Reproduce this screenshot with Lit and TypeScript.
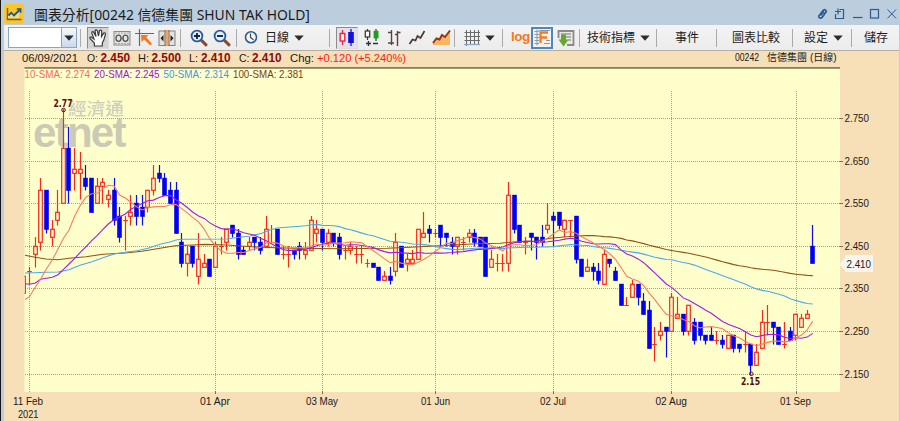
import { LitElement, html, svg, css } from "lit";
import { customElement } from "lit/decorators.js";

type Bar = [open: number, high: number, low: number, close: number];

// Daily bars, prices in cents: open high low close
const BARS: Bar[] = `
234 238 234 238|239 240 236 239|243 247 240 245|246 261 244 258|258 258 248 249|247 251 245 249|251 258 250 253|255 277 255 268
268 273 255 258|262 268 258 263|262 267 256 263|261 264 258 259|261 261 253 253|255 261 255 259|259 261 255 260|256 258 254 257
258 261 250 251|252 254 246 247|251 252 244 251|252 257 250 253|255 257 250 252|254 257 250 252|254 258 253 258|258 264 257 261
262 264 260 261|261 262 257 257|258 260 255 255|258 260 248 248|246 248 240 241|241 245 238 243|245 245 240 241|238 248 236 242
240 243 240 241|242 242 238 238|240 246 240 245|245 247 243 245|246 249 244 249|250 250 247 248|248 249 242 243|244 245 243 243
245 247 244 246|247 247 244 246|246 247 243 244|245 252 245 249|246 250 246 246|249 249 243 243|243 245 242 243|243 245 240 243
244 244 242 243|245 246 242 244|243 246 242 244|244 252 244 251|248 251 246 249|249 249 244 246|246 249 245 248|248 248 245 246
247 248 242 243|244 245 242 244|244 246 243 245|243 245 241 243|243 245 241 243|241 242 240 241|241 241 240 240|240 240 237 237
237 239 237 238|238 240 236 237|239 248 238 246|245 245 240 240|241 243 239 242|241 244 241 242|242 249 242 249|247 253 247 248
249 250 246 248|248 249 247 248|250 250 245 247|248 248 245 247|246 247 243 245|245 247 243 247|246 247 244 246|247 249 246 248
248 249 245 246|247 247 245 245|247 247 238 238|240 244 240 242|241 243 239 241|241 243 239 241|241 260 239 257|257 257 248 249
250 250 246 246|246 247 243 246|248 248 244 247|247 247 242 246|247 250 245 246|249 255 248 250|252 253 245 251|253 253 249 250
249 251 247 251|251 251 247 251|252 252 241 242|242 242 238 238|239 242 239 240|240 241 237 239|239 241 236 237|236 244 236 243
242 242 240 241|239 240 237 237|236 236 231 231|231 233 231 231|233 237 233 236|236 236 231 233|232 234 229 229|230 232 221 221
222 226 218 222|224 227 223 225|226 226 219 225|225 234 225 233|228 233 228 229|229 229 224 225|225 231 224 231|227 228 222 223
227 227 223 224|224 224 222 223|224 226 223 223|223 225 222 223|223 224 221 222|221 224 221 224|224 224 220 221|222 222 220 221
222 225 220 222|222 222 215 217|217 222 217 220|221 230 221 227|227 231 224 227|227 227 222 226|226 226 222 222|222 227 221 222
225 226 223 223|224 229 223 229|226 229 226 228|228 230 228 229|245 250 241 241`
  .trim()
  .split(/[|\n]/)
  .map((s) => s.trim().split(" ").map(Number) as Bar);

const xOf = (i: number) => 23.87 + 5.635 * i;
const yOf = (cents: number) => 118 + (275 - cents) * 4.26;

// Each average opens with points that depend on bars before the visible range
const AVERAGES = [
  { n: 100, color: "#96500f", lead: "25,255.3 35,257.3 46,259 58,259.7 69,258.3 86,256.7 103,254.3 125,253 142,251.3 160,248.3 175,245.7 193,245 205,244.4 227,245 240,246 260,247.3 293,248.3 340,248.7 387,248.3 410,247.3 453,245 477,243.7 500,243.3 513,242 537,241 550,238.3 567,236.7" },
  { n: 50, color: "#4aa8f2", lead: "25,273 35,272.7 46,272.3 58,272 69,269.7 80,265.3 92,261.7 103,257.7 114,254 125,252.3 137,250.7 148,248.3 160,244.2 171,241.7 176,240 181,239.3 227,239 232,238.3 250,236 262,233.3 270,230 277,228 293,226.7" },
  { n: 20, color: "#a31be8", lead: "25,283.7 29.5,284.3 35.3,283 40.7,279.3 46.3,278.3 52.3,277.3 58,274.7 63.5,269.3 69,264 74.7,258.3 80,252.7 86.3,246.3 91.7,240.7 97.3,235.3 102.7,229.7 108.3,224 113.7,219.7 120,216.7 125.3,214" },
  { n: 10, color: "#fb7a62", lead: "25,299.5 29.5,296.7 33,290.7 40.7,279 46.3,269 52.3,260 58,249 63.5,238.3 69,230" },
].map(({ n, color, lead }) => {
  const pts: string[] = [];
  for (let i = n - 1; i < BARS.length; i++) {
    let sum = 0;
    for (let k = i - n + 1; k <= i; k++) sum += BARS[k][3];
    pts.push(`${xOf(i).toFixed(1)},${(yOf(sum / n) + 0.3).toFixed(1)}`);
  }
  return { color, points: `${lead} ${pts.join(" ")}` };
});

const PRICE_LINES = [275, 265, 255, 245, 235, 225, 215];
const DATES: [x: number, label: string, left: number, width: number][] = [
  [29.5, "11 Feb", 13, 30],
  [215.5, "01 Apr", 200, 30],
  [322.5, "03 May", 306, 32],
  [435.5, "01 Jun", 421, 29],
  [553.5, "02 Jul", 540, 26],
  [671.5, "02 Aug", 655.5, 31.5],
  [796.5, "01 Sep", 780, 31],
];

const label = (x: number, y: number, w: number, text: string, cls = "") =>
  svg`<text class=${cls} x=${x} y=${y} textLength=${w} lengthAdjust="spacingAndGlyphs">${text}</text>`;

@customElement("price-chart")
export class PriceChart extends LitElement {
  static styles = css`
    :host { display: block; }
    svg { display: block; }
    text { font-family: "Liberation Sans", "Noto Sans CJK TC", sans-serif; font-size: 11.5px; fill: #1c1a18; }
    .val { font-weight: bold; font-size: 12px; fill: #8c0a0a; }
    .up { fill: #fb1c12; }
    .s10 { fill: #fb6a55; font-size: 11px; }
    .s20 { fill: #9d12dd; font-size: 11px; }
    .s50 { fill: #4297e0; font-size: 11px; }
    .s100 { fill: #7c3c10; font-size: 11px; }
    .name { font-size: 10px; }
    .mark { font-family: "DejaVu Sans", sans-serif; font-weight: bold; font-size: 9.6px; fill: #5c0c0c; }
    .logo { font-weight: bold; font-size: 42px; fill: #cbcab5; }
    .logo-cjk { font-family: "Noto Sans CJK TC", sans-serif; font-weight: 500; font-size: 17px; fill: #cfceba; }
    .grid { stroke: #a4a38c; stroke-dasharray: 1 1; shape-rendering: crispEdges; }
    .tick { stroke: #77705e; shape-rendering: crispEdges; }
    .avg { fill: none; stroke-width: 1.1; }
    .wick { stroke-width: 1.2; }
    .rise { stroke: #f8281c; }
    .fall { stroke: #0a0af5; }
    .box { fill: #ffffcc; stroke: #f8281c; stroke-width: 1.2; }
    .block { fill: #0000fa; }
    .ring { fill: none; stroke: #5c0c0c; }
  `;

  private bar([o, h, l, c]: Bar, i: number) {
    const x = Math.floor(xOf(i)) + 0.5;
    const top = Math.round(yOf(Math.max(o, c)));
    const bottom = Math.round(yOf(Math.min(o, c)));
    const high = Math.round(yOf(h));
    const low = Math.round(yOf(l)) + 0.5;
    if (o === c)
      return svg`<path class="wick rise" d="M${x} ${high}V${low}M${x - 2.3} ${top + 0.5}H${x + 2.3}"/>`;
    if (c < o)
      return svg`<path class="wick fall" d="M${x} ${high}V${low}"/>
        <rect class="block" x=${x - 2.3} y=${top - 0.2} width="4.6" height=${bottom - top + 1}/>`;
    return svg`<path class="wick rise" d="M${x} ${high}V${low}"/>
      <rect class="box" x=${x - 1.8} y=${top + 0.3} width="3.6" height=${bottom - top}/>`;
  }

  render() {
    return html`<svg width="895" height="371" viewBox="4 50 895 371">
      <rect x="4" y="50" width="895" height="371" fill="#f7dfb7"/>
      <rect x="4" y="50" width="895" height="1" fill="#b5aea4"/>
      <rect x="24.5" y="68" width="815.5" height="324" fill="#ffffcc"/>
      <rect x="24.5" y="67" width="815.5" height="1.8" fill="#858062"/>

      ${label(22, 62, 56, "06/09/2021")}
      ${label(87, 62, 11, "O:")}${label(100.5, 62, 29.5, "2.450", "val")}
      ${label(138, 62, 11, "H:")}${label(151.5, 62, 29.5, "2.500", "val")}
      ${label(189, 62, 9, "L:")}${label(201, 62, 29.5, "2.410", "val")}
      ${label(239, 62, 10.5, "C:")}${label(252, 62, 29.5, "2.410", "val")}
      ${label(290, 62, 24, "Chg:")}${label(317, 62, 89, "+0.120 (+5.240%)", "up")}
      ${label(735, 60.5, 24, "00242", "name")}
      ${label(767, 60.5, 40, "信德集團", "name")}
      ${label(810, 60.5, 26.5, "(日線)", "name")}
      ${label(24.5, 77.5, 65.5, "10-SMA: 2.274", "s10")}
      ${label(94, 77.5, 65.5, "20-SMA: 2.245", "s20")}
      ${label(163.5, 77.5, 65.5, "50-SMA: 2.314", "s50")}
      ${label(233, 77.5, 70.5, "100-SMA: 2.381", "s100")}

      ${label(68, 114.5, 56, "經濟通", "logo-cjk")}
      <text class="logo" x="33" y="147" textLength="93.5" lengthAdjust="spacing">etnet</text>

      ${PRICE_LINES.map((p) => {
        const y = Math.round(yOf(p)) + 0.5;
        return svg`<path class="grid" d="M25 ${y}H840"/><path class="tick" d="M839 ${y}H843"/>
          ${label(844.5, y + 3.8, 24.5, (p / 100).toFixed(3))}`;
      })}
      ${DATES.map(
        ([x, text, left, w], i) => svg`<path class="grid" d="M${x} 91V392"/>
          ${i ? svg`<path class="tick" d="M${x} 391V394"/>` : ""}
          ${label(left, 405, w, text)}`,
      )}
      ${label(18, 418, 20.5, "2021")}

      <svg x="24.5" y="80" width="815.5" height="312" viewBox="24.5 80 815.5 312">
        ${BARS.map((b, i) => this.bar(b, i))}
        ${AVERAGES.map((a) => svg`<polyline class="avg" points=${a.points} stroke=${a.color}/>`)}
        <circle class="ring" cx="63.5" cy="110" r="1.8"/>
        <circle class="ring" cx="751.3" cy="373.8" r="1.8"/>
      </svg>
      ${label(53.5, 107, 19, "2.77", "mark")}
      ${label(741, 384.5, 19, "2.15", "mark")}

      <path d="M839 264L845 258V255H873V272H845V270Z" fill="#f9f5ee"/>
      ${label(846.5, 268, 24.5, "2.410")}
    </svg>`;
  }
}

const caret = html`<svg class="caret" width="10" height="6" viewBox="0 0 10 6"><path d="M0.3 0.5H9.7L5 5.7Z" fill="#2c2a2a"/></svg>`;
const sep = html`<i class="sep"></i>`;

const magnifier = (plus: boolean) => html`<svg width="18" height="18" viewBox="0 0 18 18">
  <path d="M11.2 11.2L16 15.8" stroke="#8a4a2c" stroke-width="3" stroke-linecap="round"/>
  <circle cx="7" cy="7" r="5.4" fill="#e3effa" stroke="#2a5d98" stroke-width="1.8"/>
  <path d=${plus ? "M4 7H10M7 4V10" : "M4 7H10"} stroke="#15253e" stroke-width="1.9"/>
</svg>`;

@customElement("app-root")
export class AppRoot extends LitElement {
  static styles = css`
    :host {
      display: flex;
      flex-direction: column;
      box-sizing: border-box;
      width: 900px;
      height: 421px;
      overflow: hidden;
      border-left: 1px solid #15151a;
      background: #bccddd;
      font-family: "Liberation Sans", "Noto Sans CJK TC", sans-serif;
      color: #1b1b1b;
    }
    svg { display: block; flex: none; }
    .title { display: flex; align-items: center; height: 25px; padding: 0 1px 0 3px; }
    .title span {
      margin: 4px 0 0 10px;
      font: 13.9px/20px "Noto Sans", "Noto Sans CJK TC", sans-serif;
      white-space: nowrap;
    }
    .title .win { margin: 3px 0 0 auto; }
    .appicon { margin-top: 3px; }
    .bar {
      display: flex;
      align-items: center;
      height: 25px;
      margin-left: 3px;
      margin-right: 1px;
      padding-left: 4px;
      background: linear-gradient(#f4f3f3, #ececec);
      font-size: 12px;
      font-family: "Noto Sans CJK TC", sans-serif;
      white-space: nowrap;
    }
    .bar > div > span { line-height: 22px; margin-top: -2px; flex: none; }
    .sep { flex: none; width: 1px; height: 18px; background: #aaa; }
    .combo { display: flex; box-sizing: border-box; width: 69px; height: 21px; border: 1px solid #8ca6c2; background: #fff; margin-right: 3px; flex: none; }
    .combo div { display: flex; align-items: center; justify-content: center; width: 14px; margin-left: auto; border-left: 1px solid #8ca6c2; background: linear-gradient(#f6f9fc, #c9d9ea); }
    .btn { box-sizing: border-box; flex: none; display: flex; align-items: center; justify-content: center; width: 22px; height: 22px; }
    .down { border: 1px solid #8d8b8b; border-right-color: #ddd; border-bottom-color: #ddd; background: #d5d3d3; }
    .lit { border: 2px solid #4f87b8; background: #eef3f8; }
    .pale { background: #e2e2ee; }
    .log { font: bold 13.5px/22px "Liberation Sans", sans-serif; color: #f2791f; width: 20px; letter-spacing: -0.5px; }
    .g1 { display: flex; align-items: center; flex: none; }
    .tools { gap: 4px; padding: 0 4px 0 6px; }
    .zoom { gap: 5px; padding: 0 5px 0 9px; }
    .period { gap: 5px; padding: 0 25px 0 7px; }
    .period svg:first-child { margin-right: 2px; }
    .types { gap: 6px; padding: 0 3px 0 6px; }
    .gridding { gap: 4px; padding: 0 7px 0 9px; }
    .modes { gap: 0; padding: 0 4px 0 8px; }
    .modes svg { margin-left: 4px; }
    .modes .lit svg { margin-left: 0; }
    .ind { gap: 5px; padding: 0 6px 0 7px; }
    .event { padding: 0 17px 0 18px; }
    .compare { padding: 0 12px 0 15px; }
    .setup { gap: 5px; padding: 0 8px 0 11px; }
    .save { padding-left: 12px; }
    price-chart { margin-left: 3px; }
  `;

  render() {
    return html`
      <div class="title">
        <svg class="appicon" width="20" height="20" viewBox="0 0 20 20">
          <rect width="20" height="20" rx="3" fill="#fcc62b"/>
          <path d="M3.5 4V15.5H17.5" fill="none" stroke="#5a6570" stroke-width="1.5"/>
          <path d="M4 14V12L7 9L10 12L15 7V14Z" fill="#f5dc80"/>
          <path d="M4.5 11.5L7.3 8.7L10 11.5L15.5 6" fill="none" stroke="#1e5289" stroke-width="1.8"/>
          <path d="M12.8 5H16.6V8.8" fill="none" stroke="#1e5289" stroke-width="1.6"/>
        </svg>
        <span>圖表分析[00242 信德集團 SHUN TAK HOLD]</span>
        <svg class="win" width="82" height="14" viewBox="817 7 82 14" fill="none" stroke="#2b5c90" stroke-width="1.2">
          <path d="M818.5 16.5L823 10.5Q825.5 8.5 826.3 11.5L822.5 17Q819.5 19.3 818.5 16.5M820.7 15.5L824 11.5" stroke-width="1.7"/>
          <path d="M839.5 9.5H843.5V18.5H835.5V14M838 8.5V14.5M835 11.5H841"/>
          <path d="M853 17.5H862.5"/>
          <rect x="870.5" y="9.5" width="8" height="8.5"/>
          <path d="M887.5 9.5L896 18.3M896 9.5L887.5 18.3" stroke-width="1"/>
        </svg>
      </div>

      <div class="bar">
        <div class="combo"><div>${caret}</div></div>
        ${sep}
        <div class="g1 tools">
          <div class="btn down">
            <svg width="20" height="20" viewBox="0 0 20 20">
              <path d="M6.4 18V15L2 10.4Q1.4 8.6 3.5 9.2L6 11L3.8 5Q3.8 3 5.5 4L8 8.5L7 2.7Q7.9 1 9.3 2.6L10.5 8L11.5 2.7Q13.2 1.4 13.7 3.2L13.5 8.6L15.7 5.1Q17.6 4.5 17.4 6.3L15.8 12L14.3 15V18Z" fill="#fff" stroke="#3a3a3a" stroke-width="1.2"/>
            </svg>
          </div>
          <svg width="18" height="18" viewBox="0 0 18 18" fill="none">
            <rect x="1" y="2.5" width="16" height="13.5" fill="#e3e3df" stroke="#8a8a86"/>
            <path d="M2 4H16M2 14.5H16" stroke="#aaa" stroke-dasharray="2 1"/>
            <ellipse cx="5.5" cy="9.3" rx="2.5" ry="3.1" stroke="#555" stroke-width="1.3"/>
            <ellipse cx="12.5" cy="9.3" rx="2.5" ry="3.1" stroke="#555" stroke-width="1.3"/>
            <path d="M8 9.3H10" stroke="#666" stroke-width="1.3"/>
          </svg>
          <svg width="19" height="18" viewBox="0 0 19 18">
            <path d="M0 4.5H19M4.5 0V17" stroke="#6d6864" stroke-width="1.2"/>
            <path d="M6 6H13.5L11.2 8.2L17 14.8L15.4 16.4L9 10.4L6.5 13Z" fill="#f47a20"/>
          </svg>
          <svg width="18" height="18" viewBox="0 0 18 18">
            <rect x="1" y="2" width="16" height="14.5" fill="#e4e2de" stroke="#85827e"/>
            <rect x="7.6" y="1" width="2.8" height="16" fill="#f4a45a"/>
            <path d="M7 1V17M11 1V17" stroke="#77695c"/>
            <path d="M5.5 6V12.5L2.5 9.2ZM12.5 6V12.5L15.5 9.2Z" fill="#222"/>
          </svg>
        </div>
        ${sep}
        <div class="g1 zoom">${magnifier(true)}${magnifier(false)}</div>
        ${sep}
        <div class="g1 period">
          <svg width="14" height="15" viewBox="0 0 14 15">
            <circle cx="7" cy="7.2" r="5.5" fill="#f1f7fd" stroke="#315b8c" stroke-width="1.6"/>
            <path d="M6.5 3.5V7.5L9.5 9.8" fill="none" stroke="#444" stroke-width="1.2"/>
          </svg>
          <span>日線</span>${caret}
        </div>
        ${sep}
        <div class="g1 types">
          <div class="btn down pale">
            <svg width="18" height="18" viewBox="0 0 18 18">
              <path d="M4.5 1V16" stroke="#ea2338" stroke-width="1.3"/><rect x="2.2" y="4.5" width="4.6" height="7.5" fill="#fff" stroke="#ea2338" stroke-width="1.4"/>
              <path d="M13 0V17" stroke="#1111dd" stroke-width="1.3"/><rect x="10.2" y="3" width="5.6" height="11" fill="#1111dd"/>
            </svg>
          </div>
          <svg width="17" height="19" viewBox="0 0 17 19">
            <path d="M3.5 1V12M12 1V13" stroke="#333" stroke-width="1.2"/>
            <rect x="1.3" y="3" width="4.4" height="6" fill="#fff" stroke="#443a36" stroke-width="1.3"/>
            <rect x="9.6" y="2.8" width="4.9" height="7.6" fill="#19a11b"/>
            <path d="M2 15.5H7M4.5 13V18M9 15.5H14" stroke="#333" stroke-width="1.4"/>
          </svg>
          <svg width="15" height="18" viewBox="0 0 15 18">
            <path d="M4.5 1V16M1 3.5H4.5M1 14H7M10.5 2V17M8 5.5H10.5M10.5 3.5H13.5" stroke="#55443c" stroke-width="1.4"/>
          </svg>
          <svg width="18" height="18" viewBox="0 0 18 18">
            <path d="M1.5 15L4.5 10.5L7.5 11.5L9.5 7L12.5 9L16.5 2" fill="none" stroke="#4b3a34" stroke-width="1.7"/>
          </svg>
          <svg width="19" height="18" viewBox="0 0 19 18">
            <path d="M1 14L4.5 9.5L7.5 10.5L10 6L13 8L18 1V16H1Z" fill="#fbb562"/>
            <path d="M1 14L4.5 9.5L7.5 10.5L10 6L13 8L18 1.5" fill="none" stroke="#8b3c12" stroke-width="2"/>
          </svg>
        </div>
        ${sep}
        <div class="g1 gridding">
          <svg width="17" height="16" viewBox="0 0 17 16">
            <path d="M0.5 2.5H16M0.5 6.5H16M0.5 10.5H16M2.5 0V16M6.5 0V15M10.5 0V15M14.5 0V15" stroke="#686a6c"/>
            <path d="M0 14.5H16" stroke="#88a8c8" stroke-width="1.3"/>
          </svg>
          ${caret}
        </div>
        ${sep}
        <div class="g1 modes">
          <span class="log">log</span>
          <div class="btn lit">
            <svg width="17" height="17" viewBox="0 0 17 17">
              <path d="M3 0.5V16.5M0.5 2.5H5M0.5 5.5H5M0.5 8.5H5M0.5 11.5H5M0.5 14.5H5M5 1.5H16M10 14.5H16M12 11.5H16" stroke="#8d989f"/>
              <path d="M6.5 14V3.5H14M7 8.5H13" fill="none" stroke="#f47c1e" stroke-width="2.3"/>
            </svg>
          </div>
          <svg width="18" height="18" viewBox="0 0 18 18">
            <path d="M1.5 9V2H16.5V16H10" fill="#e8e8e4" stroke="#8a8a8a" stroke-width="1.8"/>
            <path d="M4 5H14M9 8H14M11 11H14" stroke="#999" stroke-width="1.3"/>
            <path d="M4 5.5H9V10.5H11.5L6.5 17.5L1.5 10.5H4Z" fill="#62a92d"/>
          </svg>
        </div>
        ${sep}
        <div class="g1 ind"><span>技術指標</span>${caret}</div>
        ${sep}
        <div class="g1 event"><span>事件</span></div>
        ${sep}
        <div class="g1 compare"><span>圖表比較</span></div>
        ${sep}
        <div class="g1 setup"><span>設定</span>${caret}</div>
        ${sep}
        <div class="g1 save"><span>儲存</span></div>
      </div>

      <price-chart></price-chart>
    `;
  }
}
